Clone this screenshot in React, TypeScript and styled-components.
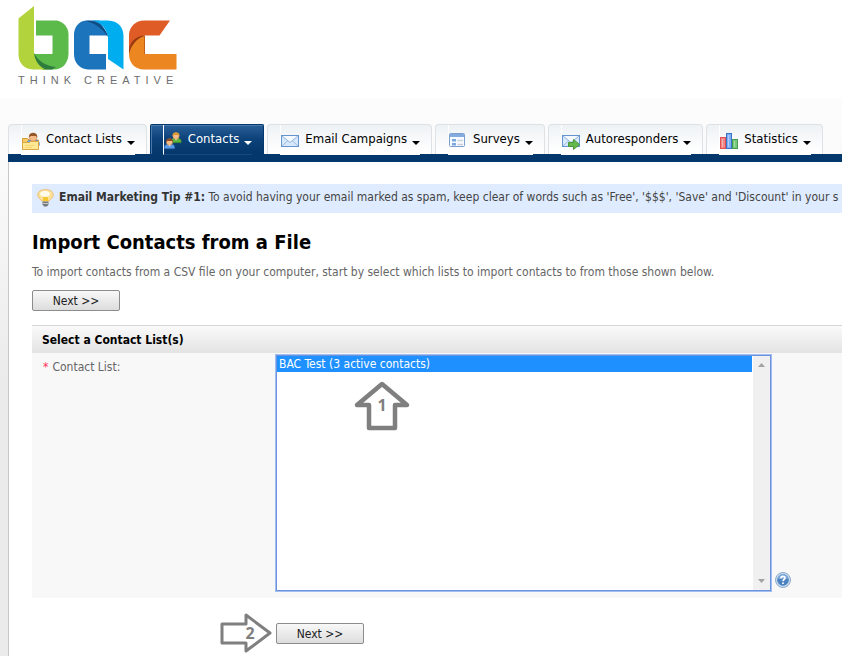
import React from "react";
import styled, { createGlobalStyle, css } from "styled-components";

const fontStack = `Tahoma, "DejaVu Sans Condensed", "Noto Sans", sans-serif`;
const navy = "#04376b";

const GlobalStyle = createGlobalStyle`
  *, *::before, *::after { box-sizing: border-box; }
  html { background: #ffffff; }
  body { margin: 0; overflow-x: hidden; font-family: ${fontStack}; font-size: 12px; color: #666666; }
`;

const Page = styled.div`
  display: flex;
  flex-direction: column;
  min-height: 100vh;
  background: linear-gradient(#ffffff 96px, #fcfcfc 100px, #fafafa 170px, #ebebeb 380px);
  overflow: hidden;
`;

const Header = styled.header`
  display: flex;
  align-items: flex-start;
  height: 124px;
  padding: 6px 18px 0;
`;

const LogoLink = styled.a`
  display: flex;
  flex-direction: column;
  color: #6d6e71;
  text-decoration: none;
`;

const Tagline = styled.span`
  font-family: "Liberation Sans", sans-serif;
  font-size: 11px;
  line-height: 14px;
  letter-spacing: 5px;
  margin-top: 3px;
  white-space: nowrap;
`;

const Tabs = styled.nav`
  display: flex;
  gap: 3px;
  height: 38px;
  margin-left: 8px;
  border-bottom: 8px solid ${navy};
`;

const Tab = styled.a<{ $active?: boolean }>`
  display: flex;
  height: 30px;
  padding: 0 11px 0 12px;
  border: 1px solid #dce2e6;
  border-bottom: 0;
  border-radius: 4px 4px 0 0;
  background: linear-gradient(#eef2f5, #ffffff 26px);
  color: #000000;
  font-size: 13px;
  line-height: 16px;
  text-decoration: none;
  white-space: nowrap;
  ${(p) =>
    p.$active &&
    css`
      border-color: ${navy};
      border-radius: 2px 2px 0 0;
      background: linear-gradient(#2a6098, #0c4279 14px, ${navy});
      box-shadow: inset 1px 1px 0 #4a78aa;
      color: #ffffff;
    `}
`;

const TabInner = styled.span<{ $active?: boolean }>`
  display: flex;
  align-items: flex-start;
  height: 30px;
  padding-top: 6px;
  border-left: 1px solid #ffffff;
  border-bottom: 1px solid ${(p) => (p.$active ? "#174a80" : "#ffffff")};
`;

const TabIcon = styled.svg`
  width: 18px;
  height: 18px;
  margin: 1px 6px 0 0;
`;

const Caret = styled.svg`
  width: 8px;
  height: 4px;
  margin: 10px 0 0 5px;
  fill: currentColor;
`;

const Panel = styled.main`
  flex: 1;
  margin-left: 8px;
  padding: 22px 0 13px 23px;
  border-left: 1px solid #c8c8c8;
  background: #ffffff;
`;

const Tip = styled.p`
  display: flex;
  align-items: center;
  gap: 5px;
  height: 29px;
  margin: 0;
  padding: 0 0 4px 5px;
  background: #dfecff;
  color: #444444;
  white-space: nowrap;
`;

const TipIcon = styled.svg`
  flex: none;
  width: 17px;
  height: 18px;
  margin-top: 3px;
`;

const TipText = styled.span`
  b { color: #333333; }
`;

const Title = styled.h1`
  margin: 16px 0 0;
  color: #000000;
  font-size: 20px;
  line-height: 26px;
`;

const Intro = styled.p`
  margin: 9px 0 10px;
  line-height: 16px;
  white-space: nowrap;
`;

const PushButton = styled.button`
  width: 88px;
  height: 21px;
  padding: 1px 0 0;
  border: 1px solid #8c8c8c;
  border-radius: 2px;
  background: linear-gradient(#f8f8f8, #dddddd);
  color: #222222;
  font: 12px/18px ${fontStack};
`;

const Group = styled.section`
  margin-top: 14px;
  background: #f8f8f8;
`;

const GroupTitle = styled.h2`
  height: 28px;
  margin: 0;
  padding-left: 10px;
  border-top: 1px solid #d6d6d6;
  background: linear-gradient(#fafafa, #e3e3e3);
  color: #000000;
  font-size: 12px;
  line-height: 28px;
`;

const FieldRow = styled.div`
  display: grid;
  grid-template-columns: 243px 1fr;
  padding: 1px 0 6px;
`;

const FieldLabel = styled.label`
  padding: 5px 0 0 11px;
  line-height: 16px;
`;

const Required = styled.span`
  margin-right: 4px;
  color: #ff3355;
`;

const Control = styled.div`
  display: flex;
  align-items: flex-end;
  gap: 3px;
`;

const ListFrame = styled.div`
  position: relative;
  display: flex;
  width: 497px;
  height: 238px;
  border: 1px solid #a3bdf0;
  outline: 1px solid #6a94e0;
  outline-offset: -2px;
  background: #ffffff;
  padding: 1px;
`;

const ListBox = styled.select`
  flex: 1;
  min-width: 0;
  padding: 0;
  border: 0;
  border-radius: 0;
  outline: 0;
  background: #ffffff;
  font: 12px/16px ${fontStack};
  overflow: hidden;
  scrollbar-width: none;

  option {
    height: 16px;
    min-height: 16px;
    padding: 1px 2px 0;
    line-height: 15px;
  }
  option:checked {
    background: #1e90ff linear-gradient(#1e90ff, #1e90ff);
    color: #ffffff;
    -webkit-text-fill-color: #ffffff;
  }
`;

const ScrollRail = styled.div`
  display: flex;
  flex-direction: column;
  justify-content: space-between;
  align-items: center;
  width: 17px;
  margin-left: 1px;
  padding: 7px 0;
  background: #f0f0f0;
`;

const RailArrow = styled.svg`
  width: 7px;
  height: 4px;
  fill: #a3a3a3;
`;

const Callout = styled.svg`
  position: absolute;
  left: 77px;
  top: 25px;
  width: 58px;
  height: 54px;
`;

const HelpButton = styled.button`
  width: 16px;
  height: 16px;
  margin-bottom: 4px;
  padding: 0;
  border: 0;
  background: none;
  svg { display: block; }
`;

const Footer = styled.div`
  display: grid;
  grid-template-columns: 241px 1fr;
  align-items: center;
  column-gap: 3px;
  margin-top: 14px;
`;

const StepArrow = styled.svg`
  justify-self: end;
  width: 54px;
  height: 42px;
`;

const calloutText = {
  fontFamily: "Noto Sans, sans-serif",
  fontWeight: 700,
  fontSize: 16,
  fill: "#7f7f7f",
  textAnchor: "middle" as const,
};

const Person = ({ x, y, hair, shirt, edge }: { x: number; y: number; hair: string; shirt: string; edge: string }) => (
  <g transform={`translate(${x} ${y})`}>
    <path d="M.3 10.700V9.300C.3 7 2 6 5.500 6s5.200 1 5.200 3.300v1.400Z" fill={shirt} stroke={edge} strokeWidth=".6" />
    <path d="M4 6.300 5.500 8.500 7 6.300Z" fill="#fff" />
    <ellipse cx="5.500" cy="4" rx="3.100" ry="3.200" fill="#f6bd8a" stroke="#c98448" strokeWidth=".5" />
    <path d="M2 4.200C1.300-1 9.700-1 9 4.200L7.800 2.900H3.500Z" fill={hair} />
  </g>
);

const Envelope = () => (
  <>
    <rect x=".5" y="3.500" width="17" height="11" fill="#d6e8fa" stroke="#6594ce" />
    <path d="m1 14 6-5.500M17 14l-6-5.500" stroke="#9dbde5" fill="none" />
    <path d="m1 4 8 6.500L17 4" stroke="#8fb2e0" fill="#f4f9ff" />
  </>
);

const icons: Record<string, React.ReactNode> = {
  lists: (
    <>
      <path d="M.5 6.500h5l1.500 1.500h9.500v9H.5Z" fill="#f5ca61" stroke="#d49c38" />
      <g transform="translate(4.500 .5) scale(1.200)">
        <Person x={0} y={0} hair="#96582b" shirt="#6f9fe0" edge="#5a88c8" />
      </g>
      <path d="M.5 10.500h7l1-1h8v8H.5Z" fill="#ffe996" stroke="#dba843" />
      <path d="M3 13.500h10M3 15.500h7" stroke="#f7d66e" />
    </>
  ),
  contacts: (
    <>
      <Person x={6.500} y={0} hair="#d99835" shirt="#5fb33c" edge="#347c25" />
      <Person x={0} y={6} hair="#8e4b27" shirt="#5b9be8" edge="#2461ac" />
    </>
  ),
  email: <Envelope />,
  surveys: (
    <>
      <rect x=".5" y="1.500" width="15" height="13" rx="1" fill="#f7fbff" stroke="#7d9fce" />
      <path d="M1 2h14v3H1Z" fill="#83abe0" />
      <path d="M3 7h4v2.500H3ZM3 11h4v2.500H3Z" fill="#7ba7e0" />
      <path d="M8.500 8.500H14M8.500 12.500H14" stroke="#c9d0da" strokeWidth="1.500" />
    </>
  ),
  auto: (
    <>
      <Envelope />
      <path d="M6.500 10.500h5v-3l6 5-6 5v-3h-5Z" fill="#65b84c" stroke="#4b9637" />
    </>
  ),
  stats: (
    <>
      <rect x=".5" y="5.500" width="5" height="11" fill="#f28585" stroke="#e05252" />
      <rect x="12.500" y="7.500" width="5" height="9" fill="#75c878" stroke="#48a04f" />
      <rect x="6.500" y="1.500" width="5" height="15" fill="#7fb0f3" stroke="#3a72c8" />
      <path d="M2.500 7v8M8.500 3v12M14.500 9v6" stroke="#fff" strokeOpacity=".4" />
    </>
  ),
};

const tabs = [
  { label: "Contact Lists", icon: "lists" },
  { label: "Contacts", icon: "contacts", active: true },
  { label: "Email Campaigns", icon: "email" },
  { label: "Surveys", icon: "surveys" },
  { label: "Autoresponders", icon: "auto" },
  { label: "Statistics", icon: "stats" },
];

const Logo = () => (
  <svg width="160" height="64" viewBox="18 6 160 64" aria-hidden="true">
    <path d="M36 20.500H57C64 22 68.500 28 68.500 34V54C68 63 63 69.500 54 69.500H42L34 54H52.500V35.500H36Z" fill="#5cba4b" />
    <path d="M34 53C38 61 46 66 56 67L52 69.500H43L34 62Z" fill="#2f7d3d" />
    <path d="M18.500 18.500 34 6V53C35 61 39 67 46 69.500H33C24 69 18.500 63 18.500 54Z" fill="#b2d33b" />
    <path d="M86 20.500H99L108 35.500H89.500V54H106V69.500H88C80 69 74 63 74 54V35C74 27 79 21 86 20.500Z" fill="#1c75bc" />
    <path d="M92 20.500H108C118 21 123.500 27 123.500 36V69.500L108 59V37C106 28 101 22 92 20.500Z" fill="#00aeef" />
    <path d="M86 21C94 19.500 105 24 108 37 102 28 95 23.500 86 21Z" fill="#114b83" />
    <path d="M129 54V34C130 26 136 20.500 144 20.500H170L159.500 35.500H144V54Z" fill="#df5c27" />
    <path d="M129 54C128 44 134 36 145 35.500V54Z" fill="#973812" />
    <path d="M144.500 36V54H176.500V69.500H144C135 69.500 129 63 129 54 131 45 137 38 144.500 36Z" fill="#ec8620" />
  </svg>
);

export default function App() {
  return (
    <>
      <GlobalStyle />
      <Page>
        <Header>
          <LogoLink href="#" aria-label="bac Think Creative">
            <Logo />
            <Tagline>THINK CREATIVE</Tagline>
          </LogoLink>
        </Header>
        <Tabs>
          {tabs.map((t) => (
            <Tab key={t.label} href="#" $active={t.active}>
              <TabInner $active={t.active}>
                <TabIcon viewBox="0 0 18 18">{icons[t.icon]}</TabIcon>
                {t.label}
                <Caret viewBox="0 0 8 4"><path d="M0 0h8L4 4Z" /></Caret>
              </TabInner>
            </Tab>
          ))}
        </Tabs>
        <Panel>
          <Tip>
            <TipIcon viewBox="0 0 17 18">
              <path d="M5 12C3 9.500.8 9 .8 5.700.8 2.500 4 .7 8.500.7s7.700 1.800 7.700 5C16.200 9 14 9.500 12 12Z" fill="#ffe29a" stroke="#eebc70" />
              <ellipse cx="8" cy="4.800" rx="5" ry="3" fill="#fffbe8" />
              <path d="M6 8h5v4H6Z" fill="#f6c72e" />
              <path d="M5.500 12.500h6v3l-1.500 2H7l-1.500-2Z" fill="#77797c" />
              <path d="M5.500 14.500h6" stroke="#c5c7c9" />
            </TipIcon>
            <TipText>
              <b>Email Marketing Tip #1:</b> To avoid having your email marked as spam, keep clear of words such as 'Free', '$$$', 'Save' and 'Discount' in your s
            </TipText>
          </Tip>
          <Title>Import Contacts from a File</Title>
          <Intro>To import contacts from a CSV file on your computer, start by select which lists to import contacts to from those shown below.</Intro>
          <PushButton type="button">Next &gt;&gt;</PushButton>
          <Group>
            <GroupTitle>Select a Contact List(s)</GroupTitle>
            <FieldRow>
              <FieldLabel htmlFor="contact-list"><Required>*</Required>Contact List:</FieldLabel>
              <Control>
                <ListFrame>
                  <ListBox id="contact-list" multiple size={14} defaultValue={["bac"]}>
                    <option value="bac">BAC Test (3 active contacts)</option>
                  </ListBox>
                  <ScrollRail aria-hidden="true">
                    <RailArrow viewBox="0 0 7 4"><path d="M0 4 3.500 0 7 4Z" /></RailArrow>
                    <RailArrow viewBox="0 0 7 4"><path d="M0 0h7L3.500 4Z" /></RailArrow>
                  </ScrollRail>
                  <Callout viewBox="0 0 58 54">
                    <path d="M29 4 54 25H42V48H16V25H4Z" fill="#fff" stroke="#7f7f7f" strokeWidth="4.500" strokeLinejoin="round" />
                    <text x="29" y="31" {...calloutText}>1</text>
                  </Callout>
                </ListFrame>
                <HelpButton type="button" aria-label="Help">
                  <svg width="16" height="16" viewBox="0 0 16 16">
                    <circle cx="8" cy="8" r="7.500" fill="#c9dcef" stroke="#8eabcc" />
                    <circle cx="8" cy="8" r="5.800" fill="#4c82c0" />
                    <path d="M3 7a5 5 0 0 1 10 0Z" fill="#7ba7d8" />
                    <path d="M6 6.200C6 3.700 10 3.800 10 6c0 1.500-2 1.500-2 3.200M8 10.500v1.600" fill="none" stroke="#fff" strokeWidth="1.700" />
                  </svg>
                </HelpButton>
              </Control>
            </FieldRow>
          </Group>
          <Footer>
            <StepArrow viewBox="0 0 54 42">
              <path d="M3 12H27V3L51 21 27 39V31H3Z" fill="#fff" stroke="#7f7f7f" strokeWidth="3" strokeLinejoin="round" />
              <text x="31" y="27" {...calloutText}>2</text>
            </StepArrow>
            <PushButton type="button">Next &gt;&gt;</PushButton>
          </Footer>
        </Panel>
      </Page>
    </>
  );
}
